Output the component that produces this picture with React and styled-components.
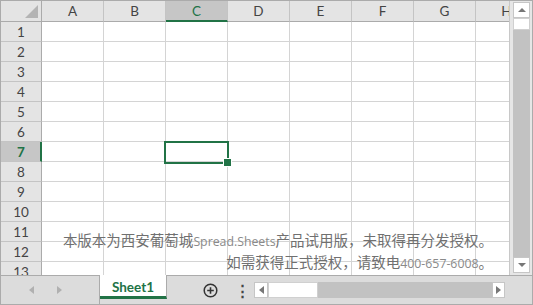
import React from "react";
import styled, { createGlobalStyle } from "styled-components";

const GlobalStyle = createGlobalStyle`
  html, body {
    margin: 0;
    padding: 0;
    background: #ffffff;
  }
  * {
    box-sizing: border-box;
  }
`;

const GREEN = "#217346";
const COLUMNS = ["A", "B", "C", "D", "E", "F", "G", "H"];
const ROWS = [1, 2, 3, 4, 5, 6, 7, 8, 9, 10, 11, 12, 13];
const ACTIVE_COL = 2;
const ACTIVE_ROW = 7;

const Workbook = styled.div`
  width: 533px;
  height: 305px;
  border: 1px solid #ababab;
  display: flex;
  flex-direction: column;
  overflow: hidden;
  font-family: "Lato", "Open Sans", "Noto Sans CJK SC", sans-serif;
`;

const Top = styled.div`
  display: flex;
  height: 274px;
`;

const Viewport = styled.div`
  position: relative;
  width: 508px;
  overflow: hidden;
  background: #ffffff;
`;

const HeaderRow = styled.div`
  display: flex;
  height: 21px;
`;

const Corner = styled.div`
  position: relative;
  flex: 0 0 41px;
  background: #e4e4e4;
  border-right: 1px solid #ababab;
  border-bottom: 1px solid #ababab;
  &::after {
    content: "";
    position: absolute;
    right: 3px;
    bottom: 3px;
    width: 0;
    height: 0;
    border-left: 13px solid transparent;
    border-bottom: 13px solid #b4b4b4;
  }
`;

const ColHeader = styled.div`
  flex: 0 0 62px;
  display: flex;
  align-items: center;
  justify-content: center;
  font-size: 13.5px;
  color: ${(p) => (p.$active ? GREEN : "#444")};
  background: ${(p) => (p.$active ? "#c6c6c6" : "#e4e4e4")};
  border-right: 1px solid #c4c4c4;
  border-bottom: ${(p) => (p.$active ? `2px solid ${GREEN}` : "1px solid #ababab")};
  padding-top: ${(p) => (p.$active ? "1px" : "0")};
`;

const Row = styled.div`
  display: flex;
  height: 20px;
`;

const RowHeader = styled.div`
  flex: 0 0 41px;
  display: flex;
  align-items: center;
  justify-content: center;
  font-size: 13.5px;
  color: ${(p) => (p.$active ? GREEN : "#444")};
  font-weight: ${(p) => (p.$active ? 700 : 400)};
  background: ${(p) => (p.$active ? "#c6c6c6" : "#e4e4e4")};
  border-bottom: 1px solid #c4c4c4;
  border-right: ${(p) => (p.$active ? `2px solid ${GREEN}` : "1px solid #ababab")};
  padding-left: ${(p) => (p.$active ? "1px" : "0")};
`;

const Cell = styled.div`
  flex: 0 0 62px;
  border-right: 1px solid #d4d4d4;
  border-bottom: 1px solid #d4d4d4;
`;

const Selection = styled.div`
  position: absolute;
  left: 163px;
  top: 140px;
  width: 65px;
  height: 23px;
  border: 2px solid ${GREEN};
  pointer-events: none;
  &::after {
    content: "";
    position: absolute;
    right: -5px;
    bottom: -5px;
    width: 7px;
    height: 7px;
    background: ${GREEN};
    border: 1px solid #ffffff;
  }
`;

const Watermark = styled.div`
  position: absolute;
  right: 16px;
  top: 229px;
  display: flex;
  flex-direction: column;
  align-items: flex-end;
  font-family: "Noto Sans CJK SC", sans-serif;
  font-size: 14.5px;
  line-height: 20px;
  color: #707070;
  white-space: nowrap;
  pointer-events: none;
`;

const Latin = styled.span`
  font-family: "Open Sans", "Noto Sans", sans-serif;
  font-size: 12.3px;
  color: #8a8a8a;
`;

const VScroll = styled.div`
  width: 23px;
  display: flex;
  flex-direction: column;
  padding: 1px 2px 2px 3px;
  background: #e6e6e6;
  border-left: 1px solid #c8c8c8;
`;

const ScrollButton = styled.div`
  flex: 0 0 ${(p) => p.$size || 16}px;
  height: ${(p) => (p.$horizontal ? "16px" : "auto")};
  background: #ffffff;
  border: 1px solid #c6c6c6;
  display: flex;
  align-items: center;
  justify-content: center;
`;

const Track = styled.div`
  flex: 1;
  background: #c2c2c2;
`;

const Thumb = styled.div`
  flex: 0 0 ${(p) => p.$size}px;
  background: #ffffff;
  border: 1px solid #d0d0d0;
`;

const Arrow = styled.span`
  width: 0;
  height: 0;
  border-left: ${(p) => (p.$dir === "left" ? "none" : p.$dir === "right" ? `5px solid ${p.$color || "#777"}` : "4px solid transparent")};
  border-right: ${(p) => (p.$dir === "right" ? "none" : p.$dir === "left" ? `5px solid ${p.$color || "#777"}` : "4px solid transparent")};
  border-top: ${(p) => (p.$dir === "down" ? `4px solid ${p.$color || "#777"}` : p.$dir === "up" ? "none" : "4px solid transparent")};
  border-bottom: ${(p) => (p.$dir === "up" ? `4px solid ${p.$color || "#777"}` : p.$dir === "down" ? "none" : "4px solid transparent")};
`;

const TabBar = styled.div`
  flex: 1;
  display: flex;
  align-items: stretch;
  background: #dcdcdc;
  border-top: 1px solid #ababab;
`;

const TabNav = styled.div`
  width: 99px;
  display: flex;
  align-items: center;
  padding-left: 28px;
  gap: 23px;
  border-right: 1px solid #ababab;
`;

const SheetTab = styled.div`
  width: 67px;
  background: #ffffff;
  border-right: 1px solid #ababab;
  border-bottom: 3px solid ${GREEN};
  margin-bottom: 5px;
  margin-top: -1px;
  display: flex;
  align-items: center;
  justify-content: center;
  font-size: 13.5px;
  font-weight: 700;
  color: ${GREEN};
  padding-top: 2px;
`;

const TabTools = styled.div`
  display: flex;
  align-items: center;
  padding-left: 36px;
  gap: 17px;
  color: #333;
`;

const Dots = styled.span`
  font-size: 15px;
  font-weight: 700;
  color: #444;
  line-height: 1;
  width: 10px;
  text-align: center;
`;

const HScroll = styled.div`
  display: flex;
  align-items: center;
  margin-left: 9px;
  width: 251px;
  padding: 5px 0 6px 0;
`;

const HTrack = styled.div`
  flex: 1;
  height: 16px;
  display: flex;
  background: #c2c2c2;
`;

const HThumb = styled.div`
  width: 50px;
  background: #ffffff;
  border: 1px solid #d0d0d0;
`;

const PlusIcon = () => (
  <svg width="15" height="15" viewBox="0 0 15 15">
    <circle cx="7.5" cy="7.5" r="6.3" fill="none" stroke="#333" strokeWidth="1.5" />
    <path d="M7.5 4.2v6.6M4.2 7.5h6.6" stroke="#333" strokeWidth="1.6" />
  </svg>
);

export default function App() {
  return (
    <>
      <GlobalStyle />
      <Workbook>
        <Top>
          <Viewport>
            <HeaderRow>
              <Corner />
              {COLUMNS.map((c, i) => (
                <ColHeader key={c} $active={i === ACTIVE_COL}>
                  {c}
                </ColHeader>
              ))}
            </HeaderRow>
            {ROWS.map((r) => (
              <Row key={r}>
                <RowHeader $active={r === ACTIVE_ROW}>{r}</RowHeader>
                {COLUMNS.map((c) => (
                  <Cell key={c} />
                ))}
              </Row>
            ))}
            <Selection />
            <Watermark>
              <div>
                本版本为西安葡萄城<Latin>Spread.Sheets</Latin>产品试用版，未取得再分发授权。
              </div>
              <div>
                如需获得正式授权，请致电<Latin>400-657-6008</Latin>。
              </div>
            </Watermark>
          </Viewport>
          <VScroll>
            <ScrollButton $size={16}>
              <Arrow $dir="up" />
            </ScrollButton>
            <Thumb $size={12} />
            <Track />
            <ScrollButton $size={16}>
              <Arrow $dir="down" />
            </ScrollButton>
          </VScroll>
        </Top>
        <TabBar>
          <TabNav>
            <Arrow $dir="left" $color="#b0b0b0" />
            <Arrow $dir="right" $color="#b0b0b0" />
          </TabNav>
          <SheetTab>Sheet1</SheetTab>
          <TabTools>
            <PlusIcon />
            <Dots>⋮</Dots>
          </TabTools>
          <HScroll>
            <ScrollButton $horizontal $size={14}>
              <Arrow $dir="left" />
            </ScrollButton>
            <HTrack>
              <HThumb />
            </HTrack>
            <ScrollButton $horizontal $size={13}>
              <Arrow $dir="right" />
            </ScrollButton>
          </HScroll>
        </TabBar>
      </Workbook>
    </>
  );
}
